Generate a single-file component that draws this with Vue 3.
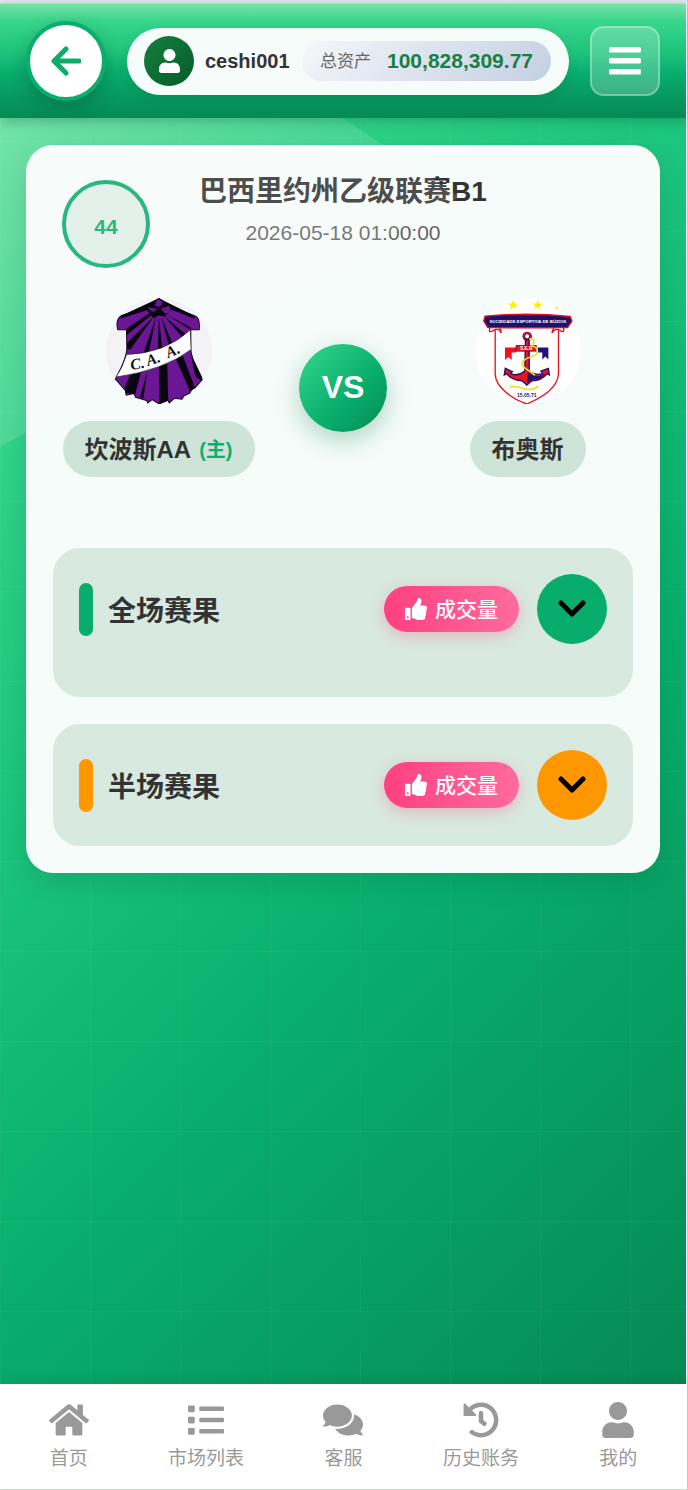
<template>
  <div class="page">
    <header class="top-bar">
      <button class="back-btn" type="button" aria-label="返回">
        <svg viewBox="0 0 30 30" width="30" height="30" fill="none" stroke="currentColor" stroke-width="5" stroke-linecap="round" stroke-linejoin="round">
          <path d="M15 3L3 15L15 27M4 15H28" />
        </svg>
      </button>

      <div class="account">
        <span class="avatar">
          <svg viewBox="0 0 448 512" width="21" height="24" fill="currentColor">
            <path :d="icons.user" />
          </svg>
        </span>
        <span class="username">{{ account.name }}</span>
        <span class="assets">
          <span class="assets-label">总资产</span>
          <span class="assets-value">{{ account.assets }}</span>
        </span>
      </div>

      <button class="menu-btn" type="button" aria-label="菜单">
        <svg viewBox="0 0 32 28" width="32" height="28" fill="currentColor">
          <rect width="32" height="5.500" rx="1.500" />
          <rect y="11" width="32" height="5.500" rx="1.500" />
          <rect y="22" width="32" height="5.500" rx="1.500" />
        </svg>
      </button>
    </header>

    <main class="content">
      <section class="match-card">
        <div class="match-head">
          <span class="countdown">{{ match.countdown }}</span>
          <div class="match-info">
            <h1 class="league">{{ match.league }}</h1>
            <time class="kickoff">{{ match.time }}</time>
          </div>
        </div>

        <div class="teams">
          <div class="team">
            <svg class="team-logo" viewBox="47 38 315 315" role="img" aria-label="坎波斯AA">
              <circle cx="204.500" cy="195.500" r="157" fill="#f3f2f4" />
              <path d="M204 39C185 55 148 72 92 91C80 97 77 115 82 132L108 132L109 190C106 225 88 252 75 279L104 312L107 327L130 322L135 333L168 343L171 350L184 340L205 353L231 341L235 350L250 336L273 339L278 329L297 320L298 307L310 306L333 281C318 250 299 220 299 188L299 132L324 132C326 108 322 94 310 91C270 76 230 59 204 39Z" fill="#6b1694" stroke="#19081f" stroke-width="3" />
              <g fill="#0a0510">
                <path d="M204 39L92 91L90 99L176 72ZM204 39L312 92L308 99L235 70Z" />
                <path d="M178 82L107 130L108 148L186 86ZM190 92L110 172L109 190L120 190ZM196 94L158 203L174 201ZM204 94L201 192L214 188ZM211 94L234 181L246 177ZM220 92L274 155L283 145ZM228 88L299 133L299 126Z" />
                <path d="M120 263L151 257L134 324L106 320L104 302ZM170 254L148 333L158 337ZM204 240L229 231L232 343L205 353ZM255 220L276 210L311 304L298 318ZM299 203L333 274L331 285L312 270Z" />
                <path d="M188 53H223L240 72L222 94L204 90L188 98L167 72Z" />
              </g>
              <g fill="#6b1694">
                <path d="M203 47L190 59L204 65L216 56Z" />
                <path d="M173 65Q188 70 199 70L190 79Q174 78 173 65ZM211 69L235 61Q243 78 227 84Q216 82 211 69Z" />
              </g>
              <path d="M108 206Q224 202 297 133L300 191Q220 252 77 273Q98 242 108 206Z" fill="#fff" stroke="#222" stroke-width="2" />
              <g class="crest-script">
                <text x="122" y="252" transform="rotate(-10 122 252)">C.</text>
                <text x="172" y="240" transform="rotate(-18 172 240)">A.</text>
                <text x="232" y="217" transform="rotate(-24 232 217)">A.</text>
              </g>
            </svg>
            <p class="team-name">坎波斯AA<span class="home-tag">(主)</span></p>
          </div>

          <span class="versus">VS</span>

          <div class="team">
            <svg class="team-logo" viewBox="47 38 315 315" role="img" aria-label="布奥斯">
              <circle cx="204.500" cy="195.500" r="157" fill="#fff" />
              <g fill="#ffee00">
                <path d="M160 43L164 54L176 54L166 61L170 72L160 65L150 72L154 61L144 54L156 54Z" />
                <path d="M233 43L237 54L249 54L239 61L243 72L233 65L223 72L227 61L217 54L229 54Z" />
                <path d="M284 66L295 64L291 73Z" />
              </g>
              <path d="M107 125V265C109 304 156 337 201 353C246 333 292 307 295 264V125" fill="#fff" stroke="#e8141c" stroke-width="4" />
              <path d="M92 124Q85 144 101 135Q118 125 125 142Q124 122 108 124ZM309 124Q315 144 301 135Q284 125 276 142Q278 122 292 124Z" fill="#fff" stroke="#d9131f" stroke-width="4" />
              <path d="M77 92Q204 80 330 93L335 107L322 126Q204 127 85 126L73 106Z" fill="#20106c" stroke="#d9131f" stroke-width="4" />
              <text class="crest-banner" x="204" y="113">SOCIEDADE ESPORTIVA DE BÚZIOS</text>
              <path d="M136 185H169V200H156V222L146 213L136 222Z" fill="#ed1420" />
              <path d="M233 185H265V221L256 212L247 221V200H233Z" fill="#21127a" />
              <circle cx="202" cy="152" r="10" fill="#fff" stroke="#25106b" stroke-width="8" />
              <circle cx="202" cy="152" r="10" fill="none" stroke="#ed1420" stroke-width="4" />
              <path d="M197 162H208V256Q229 270 248 262L243 255L265 247L268 267L261 263Q245 283 216 284L201 297L187 284Q155 282 141 263L134 267L137 247L158 257L151 262Q174 273 195 255Z" fill="#ed1420" stroke="#25106b" stroke-width="4" />
              <path d="M204 258Q230 278 256 263Q242 280 215 281L202 292Z" fill="#25106b" />
              <rect x="169" y="179" width="60" height="17" fill="#ed1420" stroke="#25106b" stroke-width="2" />
              <text class="crest-cross" x="199" y="193">S.E.B</text>
              <path d="M208 160C226 156 225 170 216 180C235 185 240 203 219 211C193 218 184 228 189 239C194 249 212 254 225 268M151 302Q171 300 188 306Q216 316 235 300" fill="none" stroke="#f3dc27" stroke-width="5" />
              <text class="crest-date" x="201" y="333">15.05.71</text>
            </svg>
            <p class="team-name">布奥斯</p>
          </div>
        </div>

        <div class="markets">
          <article
            v-for="market in markets"
            :key="market.title"
            class="market"
            :class="market.theme"
          >
            <div class="market-head">
              <h2 class="market-title">{{ market.title }}</h2>
              <button class="volume-btn" type="button">
                <svg viewBox="0 0 512 512" width="22" height="22" fill="currentColor">
                  <path :d="icons.thumb" />
                </svg>
                <span>成交量</span>
              </button>
              <button class="toggle-btn" type="button" :aria-label="`展开${market.title}`">
                <svg viewBox="0 0 28 18" width="28" height="18" fill="none" stroke="currentColor" stroke-width="5" stroke-linecap="round" stroke-linejoin="round">
                  <path d="M3 3L14 14L25 3" />
                </svg>
              </button>
            </div>
            <div v-if="market.theme === 'full'" class="market-body"></div>
          </article>
        </div>
      </section>
    </main>

    <nav class="tab-bar">
      <a v-for="tab in tabs" :key="tab.label" class="tab" href="#">
        <svg :viewBox="`0 0 ${tab.box} 512`" :width="tab.width" height="36" fill="currentColor">
          <path :d="icons[tab.icon]" />
        </svg>
        <span>{{ tab.label }}</span>
      </a>
    </nav>
  </div>
</template>

<script setup>
const account = { name: 'ceshi001', assets: '100,828,309.77' };

const match = {
  countdown: 44,
  league: '巴西里约州乙级联赛B1',
  time: '2026-05-18 01:00:00',
};

const markets = [
  { title: '全场赛果', theme: 'full' },
  { title: '半场赛果', theme: 'half' },
];

const tabs = [
  { label: '首页', icon: 'home', box: 576, width: 40 },
  { label: '市场列表', icon: 'list', box: 512, width: 36 },
  { label: '客服', icon: 'comments', box: 576, width: 40 },
  { label: '历史账务', icon: 'history', box: 512, width: 36 },
  { label: '我的', icon: 'user', box: 448, width: 32 },
];

const icons = {
  user: 'M224 256c70.7 0 128-57.3 128-128S294.7 0 224 0 96 57.3 96 128s57.3 128 128 128zm89.6 32h-16.7c-22.2 10.2-46.9 16-72.9 16s-50.6-5.8-72.9-16h-16.7C60.2 288 0 348.2 0 422.4V464c0 26.5 21.5 48 48 48h352c26.5 0 48-21.5 48-48v-41.6c0-74.2-60.2-134.4-134.4-134.4z',
  home: 'M280.37 148.26L96 300.11V464a16 16 0 0 0 16 16l112.06-.29a16 16 0 0 0 15.92-16V368a16 16 0 0 1 16-16h64a16 16 0 0 1 16 16v95.64a16 16 0 0 0 16 16.05L464 480a16 16 0 0 0 16-16V300L295.67 148.26a12.19 12.19 0 0 0-15.3 0zM571.6 251.47L488 182.56V44.05a12 12 0 0 0-12-12h-56a12 12 0 0 0-12 12v72.61L318.47 43a48 48 0 0 0-61 0L4.34 251.47a12 12 0 0 0-1.6 16.9l25.5 31A12 12 0 0 0 45.15 301l235.22-193.74a12.19 12.19 0 0 1 15.3 0L530.9 301a12 12 0 0 0 16.9-1.6l25.5-31a12 12 0 0 0-1.7-16.93z',
  list: 'M80 368H16a16 16 0 0 0-16 16v64a16 16 0 0 0 16 16h64a16 16 0 0 0 16-16v-64a16 16 0 0 0-16-16zm0-320H16A16 16 0 0 0 0 64v64a16 16 0 0 0 16 16h64a16 16 0 0 0 16-16V64a16 16 0 0 0-16-16zm0 160H16a16 16 0 0 0-16 16v64a16 16 0 0 0 16 16h64a16 16 0 0 0 16-16v-64a16 16 0 0 0-16-16zm416 176H176a16 16 0 0 0-16 16v32a16 16 0 0 0 16 16h320a16 16 0 0 0 16-16v-32a16 16 0 0 0-16-16zm0-320H176a16 16 0 0 0-16 16v32a16 16 0 0 0 16 16h320a16 16 0 0 0 16-16V80a16 16 0 0 0-16-16zm0 160H176a16 16 0 0 0-16 16v32a16 16 0 0 0 16 16h320a16 16 0 0 0 16-16v-32a16 16 0 0 0-16-16z',
  comments: 'M416 192c0-88.4-93.1-160-208-160S0 103.6 0 192c0 34.3 14.1 65.9 38 92-13.4 30.2-35.5 54.2-35.8 54.5-2.2 2.3-2.8 5.7-1.5 8.7S4.8 352 8 352c36.6 0 66.9-12.3 88.7-25 32.2 15.7 70.3 25 111.3 25 114.9 0 208-71.6 208-160zm122 220c23.9-26 38-57.7 38-92 0-66.9-53.5-124.2-129.3-148.1.9 6.6 1.3 13.3 1.3 20.1 0 105.9-107.7 192-240 192-10.8 0-21.3-.8-31.7-1.9C207.8 439.6 281.8 480 368 480c41 0 79.1-9.2 111.3-25 21.8 12.7 52.1 25 88.7 25 3.2 0 6.1-1.9 7.3-4.8 1.3-2.9.7-6.3-1.5-8.7-.3-.2-22.4-24.2-35.8-54.5z',
  history: 'M504 255.531c.253 136.64-111.18 248.372-247.82 248.468-59.015.042-113.223-20.53-155.822-54.911-11.077-8.94-11.905-25.541-1.839-35.607l11.267-11.267c8.609-8.609 22.353-9.551 31.891-1.984C173.062 425.135 212.781 440 256 440c101.705 0 184-82.311 184-184 0-101.705-82.311-184-184-184-48.814 0-93.149 18.969-126.068 49.932l50.754 50.754c10.08 10.08 2.941 27.314-11.313 27.314H24c-8.837 0-16-7.163-16-16V38.627c0-14.254 17.234-21.393 27.314-11.314l49.372 49.372C129.209 34.136 189.552 8 256 8c136.81 0 247.747 110.78 248 247.531zm-180.912 78.784l9.823-12.63c8.138-10.463 6.253-25.542-4.21-33.679L288 256.349V152c0-13.255-10.745-24-24-24h-16c-13.255 0-24 10.745-24 24v135.651l65.409 50.874c10.463 8.137 25.541 6.253 33.679-4.21z',
  thumb: 'M104 224H24c-13.255 0-24 10.745-24 24v240c0 13.255 10.745 24 24 24h80c13.255 0 24-10.745 24-24V248c0-13.255-10.745-24-24-24zM64 472c-13.255 0-24-10.745-24-24s10.745-24 24-24 24 10.745 24 24-10.745 24-24 24zM384 81.452c0 42.416-25.97 66.208-33.277 94.548h101.723c33.397 0 59.397 27.746 59.553 58.098.084 17.938-7.546 37.249-19.439 49.197l-.11.11c9.836 23.337 8.237 56.037-9.308 79.469 8.681 25.895-.069 57.704-16.382 74.757 4.298 17.598 2.244 32.575-6.148 44.632C440.202 511.587 389.616 512 346.839 512l-2.845-.001c-48.287-.017-87.806-17.598-119.56-31.725-15.957-7.099-36.821-15.887-52.651-16.178-6.54-.12-11.783-5.457-11.783-11.998v-213.77c0-3.2 1.282-6.271 3.558-8.521 39.614-39.144 56.648-80.587 89.117-113.111 14.804-14.832 20.188-37.236 25.393-58.902C282.515 39.293 291.817 0 312 0c24 0 72 8 72 81.452z',
};
</script>

<style>
body {
  background: #e6eaf4;
}
</style>

<style scoped>
* {
  box-sizing: border-box;
}

.page {
  display: flex;
  flex-direction: column;
  min-height: 100vh;
  padding: 3px 0 0;
  font-family: 'Liberation Sans', 'Noto Sans CJK SC', sans-serif;
  color: #333;
  border-right: 1px solid #ccc;
  border-bottom: 1px solid #cfe0d9;
}

button {
  display: flex;
  align-items: center;
  justify-content: center;
  padding: 0;
  border: none;
  font-family: inherit;
  cursor: pointer;
}

.top-bar {
  position: relative;
  z-index: 2;
  display: flex;
  align-items: center;
  gap: 21px;
  padding: 17px 26px;
  border-top: 1px solid #c5cfcb;
  border-right: 1px solid #fff;
  background: linear-gradient(180deg, #76e3a6 0%, #38d68c 15%, #1ec47c 42%, #07ad6c 62%, #07985e 82%, #058a53 100%);
  box-shadow: 0 3px 12px rgba(0, 60, 35, 0.3);
}

.back-btn {
  flex: none;
  width: 80px;
  height: 80px;
  border: 4px solid #0aad6c;
  border-radius: 50%;
  background: #fff;
  color: #0aad6c;
  box-shadow: 0 6px 18px rgba(0, 60, 35, 0.3);
}

.account {
  flex: 1;
  display: flex;
  align-items: center;
  height: 67px;
  padding: 0 18px 0 17px;
  border-radius: 34px;
  background: #f6fcfa;
  box-shadow: 0 3px 12px rgba(0, 60, 35, 0.12);
}

.avatar {
  display: flex;
  align-items: center;
  justify-content: center;
  width: 50px;
  height: 50px;
  margin-right: 11px;
  border-radius: 50%;
  background: linear-gradient(135deg, #15803d, #075a2a);
  color: #fff;
}

.username {
  font-size: 20px;
  font-weight: 600;
}

.assets {
  display: flex;
  align-items: center;
  gap: 16px;
  height: 40px;
  margin-left: auto;
  padding: 0 18px;
  border-radius: 20px;
  background: linear-gradient(135deg, #f5f7fa, #c3cfe2);
  white-space: nowrap;
}

.assets-label {
  padding-bottom: 3px;
  font-size: 17px;
  color: #666;
}

.assets-value {
  font-size: 21px;
  font-weight: 700;
  color: #188044;
}

.menu-btn {
  flex: none;
  width: 70px;
  height: 70px;
  border: 2px solid rgba(255, 255, 255, 0.3);
  border-radius: 14px;
  background: rgba(255, 255, 255, 0.22);
  color: #fff;
}

.content {
  position: relative;
  flex: 1;
  padding: 27px 26px;
  border-right: 1px solid #fff;
  background:
    repeating-linear-gradient(90deg, rgba(255, 255, 255, 0.04) 0 1px, transparent 1px 90px),
    repeating-linear-gradient(180deg, transparent 0 23px, rgba(255, 255, 255, 0.04) 23px 24px, transparent 24px 90px),
    linear-gradient(135deg, #5fdf9e 0%, #2fd389 18%, #1cc57d 36%, #08ad6c 62%, #058a53 100%);
}

/* diagonal light falling over the corner of the page */
.content::after {
  content: '';
  position: absolute;
  inset: 0;
  background: rgba(255, 255, 255, 0.13);
  clip-path: polygon(0 0, 50% 0, 67% 79px, 0 329px);
  pointer-events: none;
}

.match-card {
  padding: 26px 27px 27px;
  border-radius: 27px;
  background: #f6fcfa;
  box-shadow: 0 8px 28px rgba(0, 60, 35, 0.16);
}

.match-head {
  display: grid;
  grid-template-columns: 88px 1fr 88px;
  padding: 0 9px;
}

.countdown {
  display: flex;
  align-items: center;
  justify-content: center;
  height: 88px;
  margin-top: 9px;
  padding-top: 5px;
  border: 4px solid #08ad6c;
  border-radius: 50%;
  background: #e1eee7;
  font-size: 21px;
  font-weight: 700;
  color: #08ad6c;
}

.match-info {
  text-align: center;
}

.league {
  margin: 0 0 5px;
  font-size: 28px;
  font-weight: 700;
  line-height: 42px;
}

.kickoff {
  display: block;
  font-size: 21px;
  line-height: 30px;
  color: #666;
}

.teams {
  position: relative;
  z-index: 1;
  display: grid;
  grid-template-columns: 1fr 88px 1fr;
  align-items: center;
  gap: 35px;
  margin-top: 30px;
}

.team {
  display: flex;
  flex-direction: column;
  align-items: center;
  gap: 17px;
}

.team-logo {
  width: 106px;
  height: 106px;
}

.crest-script {
  font: italic 700 46px 'Liberation Serif', serif;
  fill: #111;
}

.crest-banner {
  font: 700 13px 'Liberation Sans', sans-serif;
  text-anchor: middle;
  fill: #fff;
}

.crest-cross {
  font: 700 14px 'Liberation Sans', sans-serif;
  text-anchor: middle;
  fill: #fff;
}

.crest-date {
  font: 700 15px 'Liberation Sans', sans-serif;
  text-anchor: middle;
  fill: #25106b;
}

.team-name {
  display: flex;
  align-items: center;
  gap: 8px;
  height: 56px;
  margin: 0;
  padding: 0 22px 3px;
  border-radius: 28px;
  background: #cee4d8;
  font-size: 24px;
  font-weight: 700;
  white-space: nowrap;
}

.home-tag {
  padding-top: 2px;
  font-size: 20px;
  color: #12ad70;
}

.versus {
  display: flex;
  align-items: center;
  justify-content: center;
  height: 88px;
  border-radius: 50%;
  background: linear-gradient(135deg, #34d88c 0%, #08ad6c 60%, #058a53 100%);
  box-shadow: 0 8px 24px rgba(5, 120, 72, 0.3);
  font-size: 32px;
  font-weight: 900;
  color: #fff;
}

.markets {
  display: grid;
  gap: 27px;
  margin-top: 71px;
}

.market {
  padding: 26px;
  border-radius: 27px;
  background: #d8e9df;
}

.market-head {
  display: flex;
  align-items: center;
}

.market-body {
  height: 27px;
}

.market-title {
  display: flex;
  align-items: center;
  gap: 15px;
  margin: 0 auto 0 0;
  font-size: 28px;
  font-weight: 700;
}

.market-title::before {
  content: '';
  width: 14px;
  height: 53px;
  border-radius: 7px;
}

.full .market-title::before,
.full .toggle-btn {
  background: #08ad6c;
}

.half .market-title::before,
.half .toggle-btn {
  background: #ff9800;
}

.volume-btn {
  gap: 8px;
  height: 46px;
  margin-right: 18px;
  padding: 0 21px;
  border-radius: 23px;
  background: linear-gradient(90deg, #ff4081, #ff6b9d);
  box-shadow: 0 4px 14px rgba(255, 64, 129, 0.3);
  font-size: 21px;
  font-weight: 500;
  color: #fff;
}

.volume-btn span {
  padding-bottom: 2px;
}

.toggle-btn {
  width: 70px;
  height: 70px;
  border-radius: 50%;
  color: #000;
}

.tab-bar {
  position: relative;
  z-index: 2;
  display: grid;
  grid-template-columns: repeat(5, 1fr);
  height: 105px;
  padding-top: 18px;
  background: #fff;
  box-shadow: 0 -3px 12px rgba(0, 60, 35, 0.15);
}

.tab {
  display: flex;
  flex-direction: column;
  align-items: center;
  gap: 7px;
  font-size: 19px;
  line-height: 28px;
  color: #999;
  text-decoration: none;
}
</style>
